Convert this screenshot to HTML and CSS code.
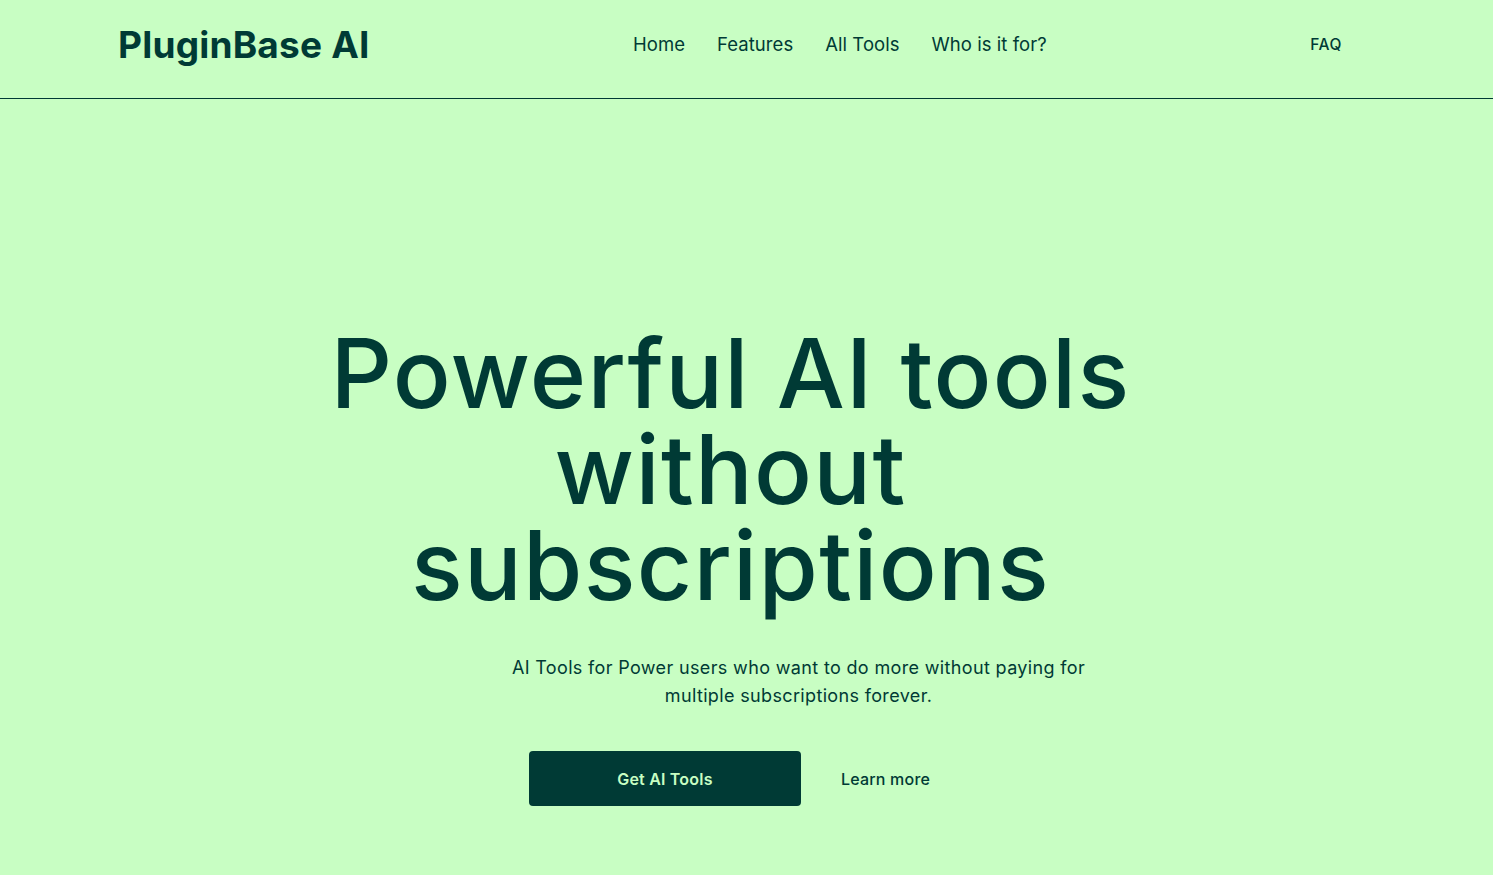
FILE: index.html
```html
<!DOCTYPE html>
<html lang="en">
<head>
<meta charset="utf-8">
<title>PluginBase AI</title>
<link rel="stylesheet" href="styles.css">
</head>
<body>
<header class="header">
  <div class="header-inner">
    <a class="logo" href="#">PluginBase AI</a>
    <nav class="nav">
      <a href="#">Home</a>
      <a href="#">Features</a>
      <a href="#">All Tools</a>
      <a href="#">Who is it for?</a>
    </nav>
    <a class="faq" href="#">FAQ</a>
  </div>
</header>
<main class="hero">
  <h1 class="title"><span class="line">Powerful AI tools</span><span class="line">without</span><span class="line">subscriptions</span></h1>
  <p class="subtitle">AI Tools for Power users who want to do more without paying for multiple subscriptions forever.</p>
  <div class="actions">
    <a class="btn" href="#">Get AI Tools</a>
    <a class="link" href="#">Learn more</a>
  </div>
</main>
</body>
</html>
```
FILE: styles.css
```css
* { box-sizing: border-box; }
html, body { margin: 0; padding: 0; }
body {
  background: #c8fec3;
  color: #003a35;
  font-family: Inter, "Noto Sans", sans-serif;
  min-height: 875px;
}
a { color: inherit; text-decoration: none; }
.header {
  height: 99px;
  border-bottom: 1px solid #003a35;
}
.header-inner {
  height: 98px;
  display: flex;
  align-items: center;
  padding: 0 151px 10px 118px;
}
.logo {
  font-size: 37px;
  font-weight: 700;
  letter-spacing: 0.2px;
  width: 515px;
}
.nav {
  display: flex;
  gap: 32px;
  font-size: 18.5px;
  font-weight: 400;
  letter-spacing: 0.05px;
  flex: 1;
}
.faq {
  font-size: 15.5px;
  font-weight: 500;
  letter-spacing: 0.6px;
}
.hero {
  display: flex;
  flex-direction: column;
  align-items: center;
  padding: 226px 0 0 0;
}
.title {
  margin: 0 32px 0 0;
  font-size: 96px;
  line-height: 96px;
  font-weight: 500;
  text-align: center;
  letter-spacing: 1.3px;
}
.line {
  display: block;
  height: 96px;
}
.subtitle {
  margin: 41px 0 0 104px;
  width: 620px;
  font-size: 18px;
  line-height: 28px;
  text-align: center;
  letter-spacing: 0.35px;
}
.actions {
  margin: 41px 34px 0 0;
  display: flex;
  align-items: center;
  gap: 40px;
}
.btn {
  width: 272px;
  height: 55px;
  display: flex;
  align-items: center;
  justify-content: center;
  background: #003a35;
  color: #c8fec3;
  border-radius: 4px;
  font-size: 16px;
  font-weight: 600;
  letter-spacing: 0.2px;
}
.link {
  font-size: 16px;
  font-weight: 500;
  letter-spacing: 0.2px;
}
```
